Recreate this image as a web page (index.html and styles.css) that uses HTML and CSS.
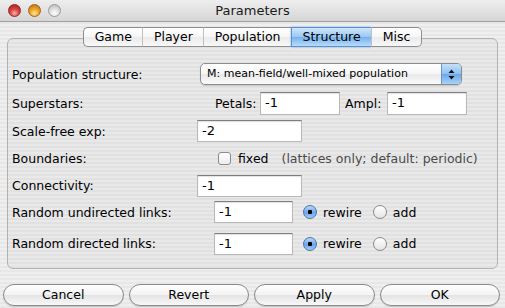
FILE: index.html
```html
<!DOCTYPE html>
<html lang="en">
<head>
  <meta charset="UTF-8">
  <meta name="viewport" content="width=device-width, initial-scale=1.0">
  <title>Parameters</title>
  <link rel="stylesheet" href="styles.css">
</head>
<body>

<div class="ventana">
  <div class="barra-titulo">
    <div class="luces">
      <span class="luz roja"></span>
      <span class="luz ambar"></span>
      <span class="luz gris"></span>
    </div>
    <div class="titulo">Parameters</div>
    <div></div>
  </div>

  <div class="contenido">
    <div class="pestanas">
      <div class="pestana">Game</div>
      <div class="pestana">Player</div>
      <div class="pestana">Population</div>
      <div class="pestana activa">Structure</div>
      <div class="pestana">Misc</div>
    </div>

    <div class="grupo">
      <div class="formulario">
        <div class="etiqueta">Population structure:</div>
        <div class="controles">
          <div class="popup">
            <span class="popup-texto">M: mean-field/well-mixed population</span>
            <span class="popup-flechas">
              <svg width="7" height="11" viewBox="0 0 7 11"><path d="M3.5 0.5 L6.5 4 L0.5 4 Z M0.5 7 L6.5 7 L3.5 10.5 Z" fill="#111"/></svg>
            </span>
          </div>
        </div>

        <div class="etiqueta">Superstars:</div>
        <div class="controles">
          <span class="sub petalos">Petals:</span>
          <div class="campo ancho-80 alto-23">-1</div>
          <span class="sub ampl">Ampl:</span>
          <div class="campo ancho-80 alto-23">-1</div>
        </div>

        <div class="etiqueta">Scale-free exp:</div>
        <div class="controles">
          <div class="campo ancho-105">-2</div>
        </div>

        <div class="etiqueta">Boundaries:</div>
        <div class="controles">
          <span class="casilla"></span>
          <span class="casilla-texto">fixed</span>
          <span class="nota">(lattices only; default: periodic)</span>
        </div>

        <div class="etiqueta">Connectivity:</div>
        <div class="controles">
          <div class="campo ancho-105">-1</div>
        </div>

        <div class="etiqueta">Random undirected links:</div>
        <div class="controles">
          <div class="campo ancho-79 corrido">-1</div>
          <span class="radio marcado"></span>
          <span class="radio-texto">rewire</span>
          <span class="radio segundo"></span>
          <span class="radio-texto">add</span>
        </div>

        <div class="etiqueta">Random directed links:</div>
        <div class="controles">
          <div class="campo ancho-79 corrido">-1</div>
          <span class="radio marcado"></span>
          <span class="radio-texto">rewire</span>
          <span class="radio segundo"></span>
          <span class="radio-texto">add</span>
        </div>
      </div>
    </div>

    <div class="botones">
      <div class="boton">Cancel</div>
      <div class="boton">Revert</div>
      <div class="boton">Apply</div>
      <div class="boton">OK</div>
    </div>
  </div>
</div>

</body>
</html>
```

FILE: styles.css
```css
body {
  margin: 0;
  font-family: "DejaVu Sans", sans-serif;
  font-size: 12.5px;
  color: #000;
}
.ventana {
  width: 505px;
  height: 308px;
  overflow: hidden;
  background: repeating-linear-gradient(to bottom, #efefef 0 2px, #e7e7e7 2px 4px);
}

/* barra de titulo */
.barra-titulo {
  height: 21px;
  border-bottom: 1px solid #a0a0a0;
  background: linear-gradient(#eeeeee, #d6d6d6);
  display: grid;
  grid-template-columns: 1fr auto 1fr;
  align-items: center;
}
.luces {
  display: flex;
  gap: 7px;
  padding-left: 8px;
}
.luz {
  width: 13px;
  height: 13px;
  border-radius: 50%;
  box-sizing: border-box;
}
.roja {
  background: radial-gradient(circle at 50% 75%, #f8b0a8 0, #d8433e 45%, #9c1d1b 100%);
  border: 1px solid #8a2a28;
}
.ambar {
  background: radial-gradient(circle at 50% 75%, #fde7a0 0, #f0a124 45%, #b46a10 100%);
  border: 1px solid #9a6420;
}
.gris {
  background: radial-gradient(circle at 50% 75%, #ffffff 0, #dcdcdc 50%, #b0b0b0 100%);
  border: 1px solid #9a9a9a;
}
.titulo {
  font-size: 13px;
  color: #1a1a1a;
}

/* pestanas */
.pestanas {
  display: flex;
  justify-content: center;
  margin-top: 5px;
  position: relative;
  z-index: 1;
}
.pestana {
  height: 18px;
  line-height: 18px;
  padding: 0 10.5px;
  border: 1px solid #8e8e8e;
  border-left: 1px solid #c0c0c0;
  border-right: none;
  background: linear-gradient(#ffffff, #f6f6f6 50%, #ebebeb 52%, #f8f8f8);
  font-size: 12.5px;
}
.pestana:first-child {
  border-left-color: #8e8e8e;
  border-radius: 5px 0 0 5px;
}
.pestana:last-child {
  border-right: 1px solid #8e8e8e;
  border-radius: 0 5px 5px 0;
}
.pestana.activa {
  background: linear-gradient(#cfe5fb, #9cc9f4 48%, #76b2ef 52%, #b7dcfb);
  border-color: #5b8fcf;
  box-shadow: 0 0 2px #7ab0ea;
}

/* grupo */
.grupo {
  margin: -9px 7px 0;
  border: 1px solid #b2b2b2;
  border-radius: 6px;
  background: rgba(0, 0, 0, 0.025);
  padding: 20px 4px 6px;
}
.formulario {
  display: grid;
  grid-template-columns: 185px 1fr;
  grid-template-rows: 30px 28px 28px 27px 27px 26px 37px;
  align-items: center;
}
.controles {
  display: flex;
  align-items: center;
}

.popup {
  margin-left: 3px;
  width: 262px;
  height: 22px;
  box-sizing: border-box;
  display: flex;
  border: 1px solid #8d8d8d;
  border-radius: 5px;
  overflow: hidden;
  background: linear-gradient(#ffffff, #f6f6f6 50%, #e9e9e9 52%, #fbfbfb);
  box-shadow: 0 1px 1px rgba(0, 0, 0, 0.15);
}
.popup-texto {
  flex: 1;
  padding-left: 6px;
  line-height: 20px;
  font-size: 11px;
}
.popup-flechas {
  width: 19px;
  border-left: 1px solid #6a93c9;
  background: linear-gradient(#c6e0fa, #8fc1f2 48%, #6aa8ec 52%, #a9d3fa);
  display: flex;
  align-items: center;
  justify-content: center;
}

.campo {
  height: 22px;
  box-sizing: border-box;
  background: #fff;
  border: 1px solid #b9b9b9;
  border-top-color: #7e7e7e;
  box-shadow: inset 0 1px 1px rgba(0, 0, 0, 0.12);
  padding-left: 4px;
  line-height: 20px;
  font-size: 13px;
}
.alto-23 { height: 23px; }
.ancho-80 { width: 80px; }
.ancho-105 { width: 105px; }
.ancho-79 { width: 79px; }
.corrido { margin-left: 17px; }

.sub { font-size: 12.5px; }
.petalos { margin-left: 18px; width: 45px; }
.ampl { margin-left: 5px; width: 42px; }

.casilla {
  margin-left: 21px;
  width: 13px;
  height: 13px;
  box-sizing: border-box;
  border: 1px solid #8a8a8a;
  border-radius: 3px;
  background: linear-gradient(#ffffff, #ececec);
}
.casilla-texto { margin-left: 7px; }
.nota {
  margin-left: 13px;
  color: #4a4a4a;
}

.radio {
  margin-left: 10px;
  width: 14px;
  height: 14px;
  box-sizing: border-box;
  border-radius: 50%;
  border: 1px solid #8a8a8a;
  background: linear-gradient(#ffffff, #e4e4e4);
}
.radio.marcado {
  border-color: #4b72ad;
  background: radial-gradient(circle, #000 0 2px, transparent 2.5px),
    linear-gradient(#b9d8f8, #6aa6ea 55%, #9fcdf8);
}
.radio.segundo { margin-left: 11px; }
.radio-texto { margin-left: 6px; }

/* botones */
.botones {
  display: flex;
  gap: 5px;
  padding: 0 5px 0 3px;
  margin-top: 15px;
}
.boton {
  flex: 1;
  height: 22px;
  box-sizing: border-box;
  border: 1px solid #8a8a8a;
  border-radius: 11px;
  background: linear-gradient(#fefefe, #f3f3f3 50%, #e4e4e4 52%, #f8f8f8);
  box-shadow: 0 1px 1px rgba(0, 0, 0, 0.15);
  text-align: center;
  line-height: 20px;
}
```
